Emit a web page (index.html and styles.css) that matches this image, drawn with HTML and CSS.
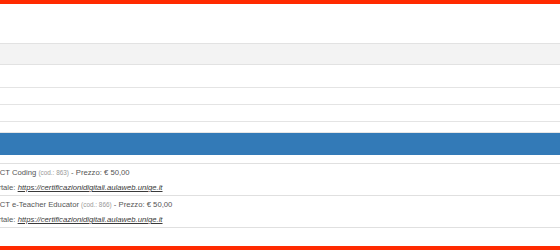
FILE: index.html
```html
<!DOCTYPE html>
<html>
<head>
    <meta charset="UTF-8">
    <title>Certificazioni</title>
    <link rel="stylesheet" href="styles.css">
</head>
<body>
    <div class="page">
        <div class="header"></div>
        <div class="band"></div>
        <div class="row tall"></div>
        <div class="row"></div>
        <div class="row"></div>
        <div class="bar"></div>

        <ul class="certs">
            <li>
                <div class="line title">ICT Coding <small>(cod.: 863)</small> - Prezzo: &euro; 50,00</div>
                <div class="line">Portale: <a href="#">https://certificazionidigitali.aulaweb.unige.it</a></div>
            </li>
            <li>
                <div class="line title">ICT e-Teacher Educator <small>(cod.: 866)</small> - Prezzo: &euro; 50,00</div>
                <div class="line">Portale: <a href="#">https://certificazionidigitali.aulaweb.unige.it</a></div>
            </li>
        </ul>
    </div>
</body>
</html>
```

FILE: styles.css
```css
body {
    margin: 0;
    font-family: "Liberation Sans", Arial, sans-serif;
    background: #fff;
    overflow: hidden;
}
.page {
    box-sizing: border-box;
    height: 250px;
    border-top: 4px solid #ff2a00;
    border-bottom: 4px solid #ff2a00;
    display: flex;
    flex-direction: column;
}
.header {
    height: 39px;
}
.band {
    height: 20px;
    background: #f3f3f3;
    border-top: 1px solid #e2e2e2;
    border-bottom: 1px solid #e2e2e2;
}
.row {
    height: 16px;
    border-bottom: 1px solid #e4e4e4;
}
.row.tall {
    height: 22px;
}
.bar {
    margin-top: 10px;
    height: 22px;
    background: #337ab7;
    border-top: 1px solid #e6e6e6;
}
.certs {
    list-style: none;
    margin: 8px 0 0 -11px;
    padding: 0;
}
.certs li {
    border-top: 1px solid #e0e0e0;
    padding-top: 1px;
}
.certs li:last-child {
    border-bottom: 1px solid #e0e0e0;
}
.line {
    font-size: 7.7px;
    line-height: 15px;
    color: #555;
    white-space: nowrap;
}
.line.title {
    padding-left: 8.5px;
}
.line small {
    font-size: 6.4px;
    color: #999;
}
.line a {
    color: #3a3a3a;
    font-style: italic;
    text-decoration: underline;
}
```
